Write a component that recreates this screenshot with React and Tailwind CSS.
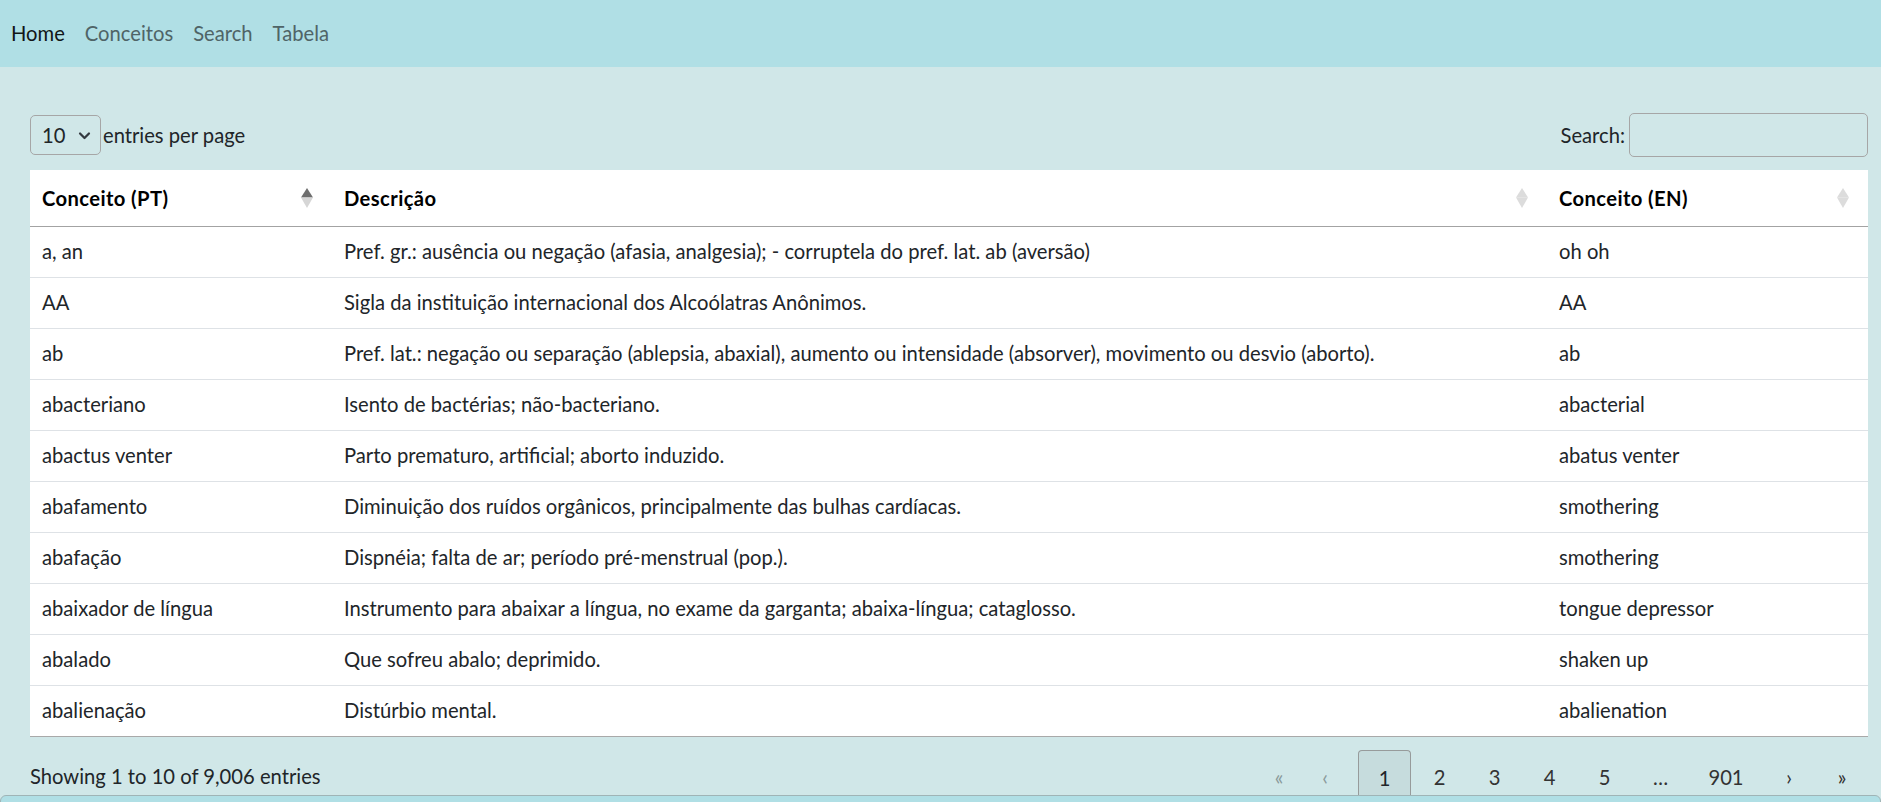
import React from "react";

const rows = [
  ["a, an", "Pref. gr.: ausência ou negação (afasia, analgesia); - corruptela do pref. lat. ab (aversão)", "oh oh"],
  ["AA", "Sigla da instituição internacional dos Alcoólatras Anônimos.", "AA"],
  ["ab", "Pref. lat.: negação ou separação (ablepsia, abaxial), aumento ou intensidade (absorver), movimento ou desvio (aborto).", "ab"],
  ["abacteriano", "Isento de bactérias; não-bacteriano.", "abacterial"],
  ["abactus venter", "Parto prematuro, artificial; aborto induzido.", "abatus venter"],
  ["abafamento", "Diminuição dos ruídos orgânicos, principalmente das bulhas cardíacas.", "smothering"],
  ["abafação", "Dispnéia; falta de ar; período pré-menstrual (pop.).", "smothering"],
  ["abaixador de língua", "Instrumento para abaixar a língua, no exame da garganta; abaixa-língua; cataglosso.", "tongue depressor"],
  ["abalado", "Que sofreu abalo; deprimido.", "shaken up"],
  ["abalienação", "Distúrbio mental.", "abalienation"],
];

function SortIcon({ active }) {
  return (
    <svg width="12" height="22" viewBox="0 0 12 22" className="shrink-0">
      <polygon points="0,10.5 6,1 12,10.5" fill={active ? "#6e6e6e" : "#dcdcdc"} />
      <polygon points="0,10.5 6,21 12,10.5" fill={active ? "#d6d6d6" : "#dcdcdc"} />
    </svg>
  );
}

function HeadCell({ label, active, width }) {
  return (
    <th className={`${width} h-[56px] p-0 border-b border-[#a3a3a3] text-left font-bold text-black tracking-[0.4px]`}>
      <div className="flex items-center justify-between pl-[12px] pr-[19px]">
        <span>{label}</span>
        <SortIcon active={active} />
      </div>
    </th>
  );
}

const pages = ["1", "2", "3", "4", "5"];

export default function App() {
  return (
    <div
      className="min-h-screen bg-[#d0e7e8] text-[#212529] text-[20.2px] leading-[1.5]"
      style={{ fontFamily: "Lato, 'Noto Sans', sans-serif" }}
    >
      <nav className="h-[67px] bg-[#b0dfe5] flex items-center pl-[11px] gap-[20px]">
        <a className="text-[#121617]">Home</a>
        <a className="text-[#4f6467]">Conceitos</a>
        <a className="text-[#4f6467]">Search</a>
        <a className="text-[#4f6467]">Tabela</a>
      </nav>

      <main className="pl-[30px] pr-[13px]">
        <div className="mt-[46px] h-[44px] flex items-center justify-between">
          <div className="flex items-center">
            <div className="w-[71px] h-[40px] border border-[#a6a6a6] rounded-[5px] flex items-center justify-between pl-[11px] pr-[9px]">
              <span>10</span>
              <svg width="13" height="13" viewBox="0 0 16 16">
                <path d="M2.5 5.5l5.5 5.5 5.5-5.5" fill="none" stroke="#343a40" strokeWidth="2.8" strokeLinecap="round" strokeLinejoin="round" />
              </svg>
            </div>
            <span className="ml-[2px]">entries per page</span>
          </div>
          <div className="flex items-center">
            <span className="mr-[4px]">Search:</span>
            <div className="w-[239px] h-[44px] border border-[#a6a6a6] rounded-[5px]" />
          </div>
        </div>

        <table className="mt-[13px] w-full table-fixed bg-white border-collapse border-b border-[#a9a9a9]">
          <thead>
            <tr>
              <HeadCell label="Conceito (PT)" active width="w-[302px]" />
              <HeadCell label="Descrição" width="w-[1215px]" />
              <HeadCell label="Conceito (EN)" width="w-[321px]" />
            </tr>
          </thead>
          <tbody>
            {rows.map((r, i) => (
              <tr key={i} className={i < rows.length - 1 ? "border-b border-[#dee2e6]" : ""}>
                <td className="h-[51px] px-[12px] py-0 whitespace-nowrap">{r[0]}</td>
                <td className="h-[51px] px-[12px] py-0 whitespace-nowrap">{r[1]}</td>
                <td className="h-[51px] px-[12px] py-0 whitespace-nowrap">{r[2]}</td>
              </tr>
            ))}
          </tbody>
        </table>

        <div className="h-[58px] flex items-end justify-between">
          <span className="mb-[3px]">Showing 1 to 10 of 9,006 entries</span>
          <div className="flex items-end h-[45px] overflow-hidden">
            <span className="w-[48px] h-[45px] flex items-center justify-center pt-[11px] text-[#8a9a9b]">«</span>
            <span className="w-[44px] h-[45px] flex items-center justify-center pt-[11px] text-[#8a9a9b]">‹</span>
            <div className="ml-[11px] flex gap-[2px]">
              {pages.map((p) => (
                <span
                  key={p}
                  className={`w-[53px] h-[45px] flex items-center justify-center pt-[11px] ${
                    p === "1"
                      ? "border border-b-0 border-[#979b9b] rounded-t-[4px] bg-[#c6dcdd] text-[#212529]"
                      : "text-[#333]"
                  }`}
                >
                  {p}
                </span>
              ))}
              <span className="w-[55px] h-[45px] flex items-center justify-center pt-[11px] text-[#333]">…</span>
              <span className="w-[72px] h-[45px] flex items-center justify-center pt-[11px] text-[#333]">901</span>
              <span className="w-[50px] h-[45px] flex items-center justify-center pt-[11px] text-[#333]">›</span>
              <span className="w-[52px] h-[45px] flex items-center justify-center pt-[11px] text-[#333]">»</span>
            </div>
          </div>
        </div>
      </main>

      <footer className="h-[40px] bg-[#b0dfe5] border border-[#9fb4b6] rounded-t-[6px]" />
    </div>
  );
}
